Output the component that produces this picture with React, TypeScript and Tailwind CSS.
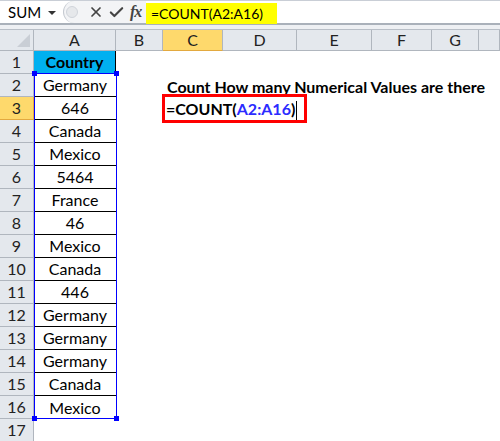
import { X, Check } from "lucide-react";

const cols = [
  { name: "A", w: "w-[82px]" },
  { name: "B", w: "w-[47px]" },
  { name: "C", w: "w-[60px]" },
  { name: "D", w: "w-[74px]" },
  { name: "E", w: "w-[75px]" },
  { name: "F", w: "w-[60px]" },
  { name: "G", w: "w-[47px]" },
  { name: "", w: "flex-1" },
];

const data = [
  "Country",
  "Germany",
  "646",
  "Canada",
  "Mexico",
  "5464",
  "France",
  "46",
  "Mexico",
  "Canada",
  "446",
  "Germany",
  "Germany",
  "Germany",
  "Canada",
  "Mexico",
  "",
];

function FormulaBar() {
  return (
    <div className="h-[29px] bg-[#eef0f3]">
      <div className="h-[25px] flex items-stretch bg-white border-t border-b-2 border-t-[#c9ced6] border-b-[#aab1ba]">
        <div className="w-[63px] relative flex items-center pl-[8px] text-[15px] text-black">
          <span>SUM</span>
          <span className="absolute left-[48px] top-[10px] w-0 h-0 border-l-[4px] border-r-[4px] border-t-[4px] border-l-transparent border-r-transparent border-t-[#333]"></span>
        </div>
        <div className="w-[83px] flex items-center bg-[#f3f4f6] rounded-l-[12px] border-l border-[#c4c9d0]">
          <span className="ml-[2px] w-[12px] h-[12px] rounded-full bg-[#e6e8eb] border border-[#d0d4da]"></span>
          <X className="ml-[10px] text-[#444]" size={16} strokeWidth={2.6} />
          <Check className="ml-[4px] text-[#444]" size={17} strokeWidth={3} />
          <span className="ml-[5px] text-[16px] italic font-bold text-[#444] font-['Liberation_Serif',serif] tracking-[-1px]">
            fx
          </span>
        </div>
        <div className="flex-1 flex items-center">
          <div className="h-[21px] mt-[2px] w-[131px] bg-[#ffff00] pl-[5px] text-[14px] text-black flex items-center">
            =COUNT(A2:A16)
          </div>
        </div>
      </div>
    </div>
  );
}

function HeaderRow() {
  return (
    <div className="flex h-[22px] bg-[#e4e8ed] border-t border-[#b9bfc7]">
      <div className="w-[34px] border-r border-b border-[#b0b6be] relative">
        <div className="absolute right-[3px] bottom-[3px] w-[13px] h-[13px] bg-[#c9ced5] [clip-path:polygon(100%_0,100%_100%,0_100%)]"></div>
      </div>
      {cols.map((c) => (
        <div
          key={c.name + "h"}
          className={`${c.w} border-r border-b border-[#b0b6be] flex items-center justify-center text-[16px] text-[#222] ${
            c.name === "C" ? "bg-[#fed96c] border-b-[#e3a93f]" : ""
          }`}
        >
          {c.name}
        </div>
      ))}
    </div>
  );
}

export default function App() {
  return (
    <div className="w-[500px] h-[441px] overflow-hidden bg-white font-['Lato','Liberation_Sans',sans-serif]">
      <FormulaBar />
      <HeaderRow />
      <div className="relative">
        {data.map((v, i) => {
          const row = i + 1;
          return (
            <div key={row} className="flex h-[23px]">
              <div
                className={`w-[34px] border-r border-b flex items-center justify-center text-[16px] text-[#222] ${
                  row === 3
                    ? "bg-[#fed96c] border-b-[#e3a93f] border-r-[#e3a93f]"
                    : "bg-[#e4e8ed] border-[#b0b6be]"
                }`}
              >
                {row}
              </div>
              <div
                className={`w-[82px] flex items-center justify-center text-[16px] text-black ${
                  row === 1 ? "bg-[#00b0f0] font-bold border-r border-b border-black" : ""
                } ${row > 1 && row < 16 ? "border-b border-black" : ""}`}
              >
                {v}
              </div>
              <div className="w-[47px]"></div>
              <div className="w-[60px] relative">
                {row === 2 && (
                  <span className="absolute left-[4px] top-[1px] whitespace-nowrap text-[16px] font-bold text-black">
                    Count How many Numerical Values are there
                  </span>
                )}
                {row === 3 && (
                  <>
                    <span className="absolute left-[3px] top-[0px] whitespace-nowrap text-[16px] font-bold text-black">
                      =COUNT(<span className="text-[#2b2bff]">A2:A16</span>)
                      <span className="inline-block w-[1px] h-[19px] bg-black align-middle ml-[1px]"></span>
                    </span>
                    <div className="absolute left-[-1px] top-[-3px] w-[145px] h-[29px] border-[3px] border-[#ff0000]"></div>
                  </>
                )}
              </div>
              <div className="flex-1"></div>
            </div>
          );
        })}
        <div className="absolute left-[34px] top-[22px] w-[83px] h-[346px] border border-[#0000ff] pointer-events-none"></div>
        <div className="absolute left-[32px] top-[20px] w-[5px] h-[5px] bg-[#0000ff]"></div>
        <div className="absolute left-[114px] top-[20px] w-[5px] h-[5px] bg-[#0000ff]"></div>
        <div className="absolute left-[32px] top-[365px] w-[5px] h-[5px] bg-[#0000ff]"></div>
        <div className="absolute left-[114px] top-[365px] w-[5px] h-[5px] bg-[#0000ff]"></div>
      </div>
    </div>
  );
}
